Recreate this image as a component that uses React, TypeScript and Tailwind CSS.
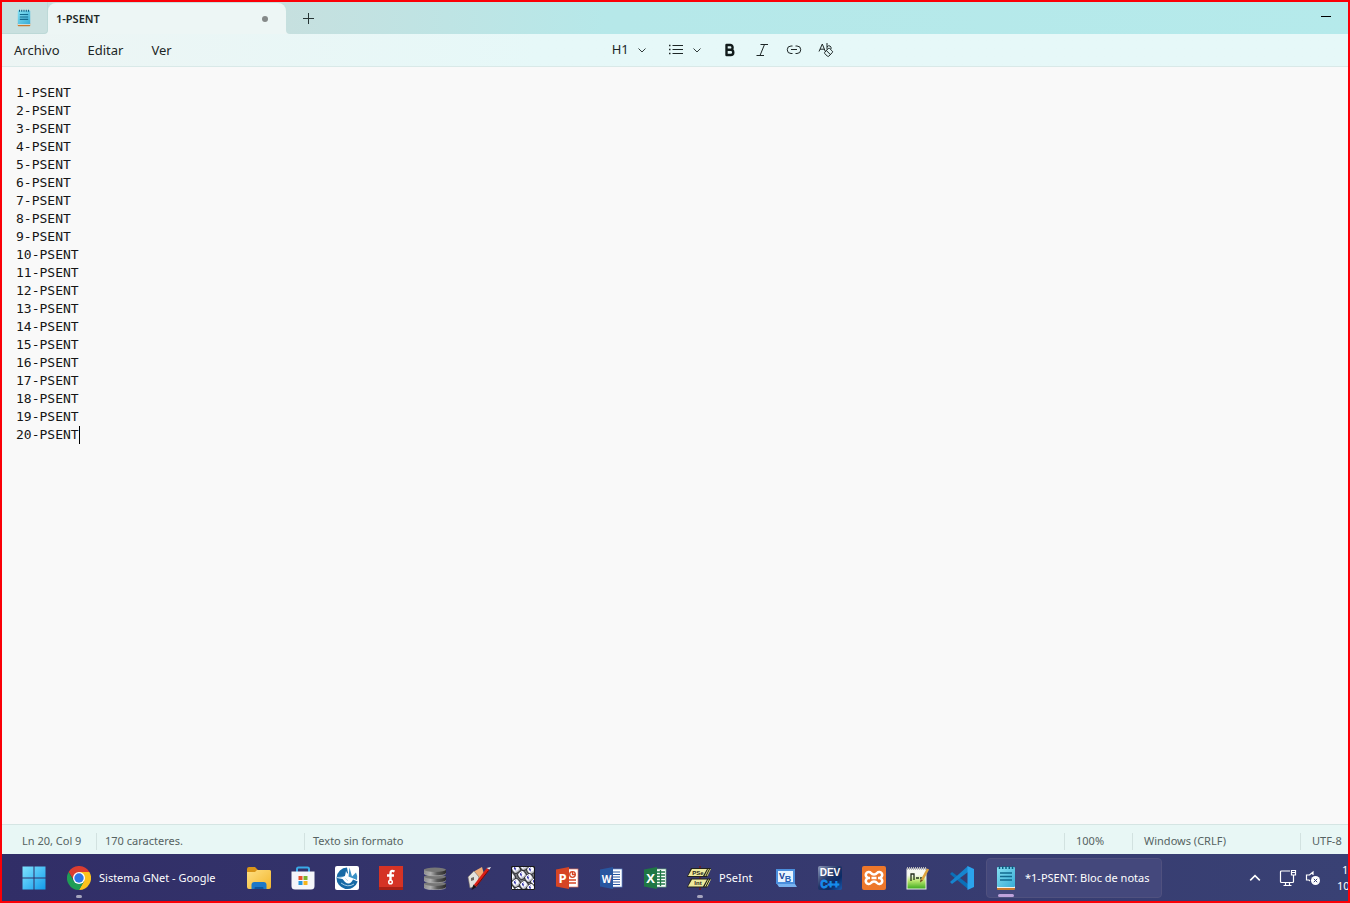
import type { ReactNode } from 'react';
import { useState } from 'react';

const INITIAL_TEXT = Array.from({ length: 20 }, (_, i) => `${i + 1}-PSENT`).join('\n');

function NotepadIcon({ className }: { className: string }) {
  return (
    <svg viewBox="0 0 20 26" className={className} aria-hidden="true">
      <defs>
        <linearGradient id="pad" x1="0" y1="0" x2="1" y2="1">
          <stop offset="0" stopColor="#86e0f2" />
          <stop offset="1" stopColor="#38acd6" />
        </linearGradient>
      </defs>
      <rect x="1" y="20" width="18" height="5" rx="1" fill="#c9792e" />
      <rect x="1" y="20" width="18" height="3" fill="#f4f1ec" />
      <rect x="1" y="2" width="18" height="20" rx="1" fill="url(#pad)" />
      <path d="M3.5 1v3M6.700 1v3M10 1v3M13.300 1v3M16.500 1v3" stroke="#0d5d80" strokeWidth="1.500" />
      <path d="M4 8h12M4 11.500h12M4 15h12" stroke="#126a8e" strokeWidth="1.500" />
    </svg>
  );
}

function Chevron({ className, up }: { className: string; up?: boolean }) {
  return (
    <svg viewBox="0 0 10 10" className={className} fill="none" stroke="currentColor" strokeWidth={up ? 1.3 : 0.9} aria-hidden="true">
      <path d={up ? 'M1 7l4-4 4 4' : 'M1.500 3.500L5 7l3.500-3.500'} />
    </svg>
  );
}

function WindowsIcon() {
  return (
    <svg viewBox="0 0 24 24" className="size-6" aria-hidden="true">
      <defs>
        <linearGradient id="win" x1="0" y1="0" x2="1" y2="1">
          <stop offset="0" stopColor="#7fe3ff" />
          <stop offset="1" stopColor="#139bea" />
        </linearGradient>
      </defs>
      <path fill="url(#win)" d="M.5.5h11v11H.5zM12.500.5h11v11h-11zM.5 12.500h11v11H.5zM12.500 12.500h11v11h-11z" />
    </svg>
  );
}

function ChromeIcon() {
  return (
    <svg viewBox="0 0 24 24" className="size-6" aria-hidden="true">
      <path fill="#db3d30" d="M1.600 6A12 12 0 0 1 22.400 6L12 6.500 7 14.500z" />
      <path fill="#fcc31e" d="M22.400 6A12 12 0 0 1 12 24l5-9L12 6z" />
      <path fill="#1f9d55" d="M1.600 6A12 12 0 0 0 12 24l5.200-9L12 17.500 6.800 15z" />
      <circle cx="12" cy="12" r="6" fill="#fff" />
      <circle cx="12" cy="12" r="4.700" fill="#2f75e8" />
    </svg>
  );
}

function FolderIcon() {
  return (
    <svg viewBox="0 0 24 24" className="size-6" aria-hidden="true">
      <defs>
        <linearGradient id="fold" x1="0" y1="0" x2="1" y2="1">
          <stop offset="0" stopColor="#ffdf83" />
          <stop offset="1" stopColor="#f2b62c" />
        </linearGradient>
      </defs>
      <path fill="#d99518" d="M0 3q0-2 2-2h6l3 3h11q2 0 2 2v5H0z" />
      <path fill="url(#fold)" d="M0 6h8l2-2h12.500q1.500 0 1.500 1.500V21q0 2-2 2H2q-2 0-2-2z" />
      <path fill="#1c78c8" d="M4.500 23v-4q0-3 3-3h9q3 0 3 3v4z" />
      <path fill="#0c559e" d="M7.500 23v-1q0-1 1-1h7q1 0 1 1v1z" />
    </svg>
  );
}

function StoreIcon() {
  return (
    <svg viewBox="0 0 24 24" className="size-6" aria-hidden="true">
      <path d="M6 7V3q0-1.500 1.500-1.500h9Q18 1.500 18 3v4" fill="none" stroke="#39a9e8" strokeWidth="2" />
      <path d="M.5 5.500h23V20q0 3.500-3.500 3.500H4Q.5 23.500.5 20z" fill="#f5f6fa" />
      <path fill="#e8502b" d="M7.500 10h4v4h-4z" />
      <path fill="#7ab52c" d="M12.500 10h4v4h-4z" />
      <path fill="#2497df" d="M7.500 15h4v4h-4z" />
      <path fill="#f6b51c" d="M12.500 15h4v4h-4z" />
    </svg>
  );
}

function GlobeBirdIcon() {
  return (
    <svg viewBox="0 0 24 24" className="size-6" aria-hidden="true">
      <rect width="24" height="24" rx="2" fill="#fff" />
      <path fill="#1769a5" d="M12 1.500A10.800 10.800 0 1 0 22.700 15.500L18 13.500Q15 20 10 16L7.500 13 2 12l7-1 4-4z" />
      <path fill="#3a91c6" d="M14.500 1.500l-1 9 8.500 3.500q1-4-1-7.500l-4 4z" />
      <path d="M2 11.500l7-.5 4 4M6 17q7 5 13 1" stroke="#b9d9ec" strokeWidth=".9" fill="none" />
      <path d="M11 5l2 4-3 4-4-1 4-2z" fill="#fff" />
    </svg>
  );
}

function FlashIcon() {
  return (
    <svg viewBox="0 0 24 24" className="size-6" aria-hidden="true">
      <rect width="24" height="24" fill="#d53325" />
      <rect y="21" width="24" height="3" fill="#a62016" />
      <path d="M15.500 5.500q-4-2-4 2v7M8 9.500h7" fill="none" stroke="#fff" strokeWidth="2.400" />
      <circle cx="11.500" cy="16" r="1.800" fill="#d53325" stroke="#fff" strokeWidth="1.500" />
    </svg>
  );
}

function DatabaseIcon() {
  return (
    <svg viewBox="0 0 24 24" className="size-6" aria-hidden="true">
      <defs>
        <linearGradient id="db">
          <stop offset="0" stopColor="#8e8e8e" />
          <stop offset=".3" stopColor="#b0b0b0" />
          <stop offset=".6" stopColor="#5a5a5a" />
          <stop offset="1" stopColor="#2b2b2b" />
        </linearGradient>
      </defs>
      {[16, 9, 2].map((y) => (
        <g key={y} transform={`translate(0 ${y})`}>
          <path d="M1 1.500v4c1 3 21 3 22 0v-4z" fill="url(#db)" />
          <ellipse cx="12" cy="1.800" rx="11" ry="2.200" fill="#777" />
          <path d="M1 5.500c1 3 21 3 22 0" stroke="#bbb" strokeWidth=".6" fill="none" />
        </g>
      ))}
    </svg>
  );
}

function PencilHouseIcon() {
  return (
    <svg viewBox="0 0 24 24" className="size-6" aria-hidden="true">
      <path fill="#efad77" d="M6 6l9-5 2 7-8 10z" />
      <path fill="#e3e2dc" d="M1 11l6-6 5 6-2 9-7 2z" stroke="#756a63" strokeWidth=".6" />
      <path d="M4 12l3-1v3l-3 1z" fill="#6b6660" />
      <path d="M21 3L8 20" stroke="#d91f16" strokeWidth="3" />
      <path d="M21.500 4.500L9.500 20" stroke="#6c0906" strokeWidth="1" />
      <path d="M19.500 2l3 1.500L24 1z" fill="#eee" />
      <path d="M6.500 18.500l3 2.500-5 3z" fill="#1b1515" />
    </svg>
  );
}

function KeysIcon() {
  const keys: [number, number][] = [
    [5, 3], [13, 0], [20, 4], [0, 11], [11, 9], [18, 12], [24, 16], [5, 17], [13, 19], [20, 22], [0, 24], [7, 25],
  ];
  return (
    <svg viewBox="0 0 24 24" className="size-6" aria-hidden="true">
      <rect width="24" height="24" fill="#77787d" />
      {keys.map(([x, y]) => (
        <g key={`${x}-${y}`} transform={`translate(${x} ${y}) rotate(-35)`}>
          <rect x="-4" y="-3.500" width="8" height="7.500" rx="2.500" fill="#b9bac0" stroke="#111117" strokeWidth=".8" />
          <rect x="-3" y="-3.500" width="6" height="5.500" rx="2" fill="#fbfbff" />
          <path d="M-1 1v-3h2M-1-.5h1.500" stroke="#3030a8" fill="none" strokeWidth=".9" />
        </g>
      ))}
      <path d="M.5.5h23v23H.5z" fill="none" stroke="#17171c" />
    </svg>
  );
}

function OfficeIcon({ letter, color, edge }: { letter: 'P' | 'W' | 'X'; color: string; edge: string }) {
  return (
    <svg viewBox="0 0 24 24" className="size-6" aria-hidden="true">
      <rect x="12" y="3" width="11" height="18" fill="#fff" stroke={edge} strokeWidth=".7" />
      {letter === 'P' && (
        <g stroke={color} fill="none" strokeWidth="1.300">
          <circle cx="17.500" cy="8.500" r="2.800" />
          <path d="M17.500 5.500v3h3M14 14h7M14 17h7" />
        </g>
      )}
      {letter === 'W' && <path d="M13 6h8M13 8.500h8M13 11h8M13 13.500h8M13 16h8M13 18.500h8" stroke={color} />}
      {letter === 'X' && <path d="M13 6h9M13 9h9M13 12h9M13 15h9M13 18h9M17.500 4v16" stroke={color} strokeWidth="1.300" />}
      <path d="M1 3.500L14 1v22L1 20.500z" fill={color} />
      <text x="7.500" y="16.500" textAnchor="middle" fontSize={letter === 'W' ? 10 : 13} fontWeight="700" fill="#fff" fontFamily="Open Sans, sans-serif">{letter}</text>
    </svg>
  );
}

function PSeIntIcon() {
  return (
    <svg viewBox="0 0 24 24" className="size-6" aria-hidden="true">
      <path d="M13 0v24" stroke="#6f1722" strokeWidth="1.500" />
      <path d="M4 2h20l-4 9H0zM4 12.500h20l-4 9H0z" fill="#23231c" />
      <path d="M5 3h15l-4 7H1zM5 13.500h15l-4 7H1z" fill="#eeea9c" />
      <path d="M21.500 3l-3.500 7M23.500 3l-3.500 7M21.500 13.500l-3.500 7M23.500 13.500l-3.500 7" stroke="#d9d67a" />
      <g fontSize="6" fontWeight="700" fontFamily="Liberation Sans, sans-serif" fill="#292720" textAnchor="middle">
        <text x="11" y="8.500">PSe</text>
        <text x="11" y="19">Int</text>
      </g>
    </svg>
  );
}

function VbIcon() {
  return (
    <svg viewBox="0 0 24 24" className="size-6" aria-hidden="true">
      <path d="M2 3h19v15H2z" fill="#4b8fdd" />
      <path d="M4 5h15v11H4z" fill="#e7f3ff" />
      <path d="M3 18h18l2 3H5z" fill="#78b2ef" />
      <text x="8" y="12.500" fontSize="9" fontWeight="700" fill="#173b91" fontFamily="Liberation Sans, sans-serif" textAnchor="middle">V</text>
      <text x="14" y="15.500" fontSize="9" fontWeight="700" fill="#2761b4" fontFamily="Liberation Sans, sans-serif" textAnchor="middle">B</text>
    </svg>
  );
}

function DevIcon() {
  return (
    <svg viewBox="0 0 24 24" className="size-6" aria-hidden="true">
      <defs>
        <linearGradient id="dev" x1="0" y1="0" x2="1" y2="1">
          <stop offset="0" stopColor="#8f99b8" />
          <stop offset=".45" stopColor="#213566" />
          <stop offset=".7" stopColor="#0b2b66" />
          <stop offset="1" stopColor="#1b5bb0" />
        </linearGradient>
      </defs>
      <rect width="24" height="24" rx="2" fill="url(#dev)" />
      <g fontWeight="700" fontFamily="Liberation Sans, sans-serif" textAnchor="middle">
        <text x="12" y="10" fontSize="10" fill="#fff">DEV</text>
        <text x="12" y="21.500" fontSize="10" fill="#168dec" stroke="#168dec" strokeWidth=".8">C++</text>
      </g>
    </svg>
  );
}

function XamppIcon() {
  return (
    <svg viewBox="0 0 24 24" className="size-6" aria-hidden="true">
      <rect width="24" height="24" rx="2" fill="#ed772b" />
      <path d="M8 12H6.500a3 3 0 1 1 2.500-5q1 1.500 3 1.500T15 7a3 3 0 1 1 2.500 5H16M8 12H6.500a3 3 0 1 0 2.500 5q1-1.500 3-1.500t3 1.500a3 3 0 1 0 2.500-5H16M9.500 12h5" fill="none" stroke="#fff" strokeWidth="2.600" strokeLinejoin="round" />
    </svg>
  );
}

function NotepadPlusIcon() {
  return (
    <svg viewBox="0 0 24 24" className="size-6" aria-hidden="true">
      <defs>
        <linearGradient id="npp" x1="0" y1="0" x2="0" y2="1">
          <stop offset=".3" stopColor="#f7f9f2" />
          <stop offset=".6" stopColor="#b8e66c" />
          <stop offset="1" stopColor="#39a91e" />
        </linearGradient>
      </defs>
      <rect x="1" y="3" width="19" height="20" fill="url(#npp)" stroke="#eee" />
      <path d="M1 2.500h19" stroke="#bbb" strokeWidth="3" strokeDasharray="1 1" />
      <path d="M5 15V8h3v6M10 12h3M14 12h2" fill="none" stroke="#24301d" strokeWidth="1.300" />
      <path d="M22 3l-6 11" stroke="#dda33e" strokeWidth="2.600" />
      <path d="M14.500 13l2.500 1.500-3 2z" fill="#70501e" />
    </svg>
  );
}

function CodeIcon() {
  return (
    <svg viewBox="0 0 24 24" className="size-6" aria-hidden="true">
      <path fill="#0b70b8" d="M0 8l2-2 16 12v5z" />
      <path fill="#1685cf" d="M0 16l2 2 16-12V0z" />
      <path fill="#2ba3ed" d="M17.500 0L24 3v18l-6.500 3z" />
    </svg>
  );
}

function TaskButton({ name, wide, active, dot, children }: { name: string; wide?: string; active?: boolean; dot?: boolean; children: ReactNode }) {
  return (
    <button
      type="button"
      aria-label={name}
      className={`relative flex h-10 shrink-0 items-center whitespace-nowrap text-left ${wide ?? 'w-11 justify-center'} ${active ? 'rounded-sm border border-[#50517f] bg-[#44487c]' : ''}`}
    >
      {children}
      {dot && <span className={`absolute bottom-0 h-[3px] rounded-full ${active ? 'left-[11px] w-4 bg-[#bfa3dc]' : 'left-5 w-1.5 bg-[#a5a4bd]'}`} />}
    </button>
  );
}

export default function App() {
  const [text, setText] = useState(INITIAL_TEXT);
  const lines = text.split('\n');
  const lastLine = lines[lines.length - 1];

  return (
    <div className="flex min-h-screen w-full flex-col overflow-hidden border-2 border-[#fb0007] bg-[#f9f9f9] font-['Noto_Sans','Open_Sans',sans-serif] text-[#1d2626]">
      <header className="flex h-8 bg-[#edf6f5]">
        <div className="flex w-[46px] items-center justify-center rounded-br-sm border-r border-b border-[#bdd9d7] bg-[#c9e0df] pr-px">
          <NotepadIcon className="h-[18px] w-[14px]" />
        </div>
        <div className="w-[238px] bg-[#c6e0df] pt-px">
          <div className="flex h-full items-center justify-between rounded-t-lg bg-[#edf6f5] pr-[18px] pl-2">
            <span className="pt-px text-[11px] font-semibold">1-PSENT</span>
            <span className="size-1.5 rounded-full bg-[#858989]" />
          </div>
        </div>
        <div className="flex flex-1 items-center justify-between rounded-bl-sm bg-linear-to-r from-[#c6e0df] via-[#b6e8e9] via-30% to-[#b5eaeb] pr-[17px] pl-[17px]">
          <button type="button" aria-label="Nueva pestaña">
            <svg viewBox="0 0 11 11" className="size-[11px]" stroke="#263434" aria-hidden="true"><path d="M5.500 0v11M0 5.500h11" /></svg>
          </button>
          <button type="button" aria-label="Minimizar" className="flex h-5 w-[10px] items-center pb-1">
            <span className="h-px w-full bg-black" />
          </button>
        </div>
      </header>

      <div className="flex h-[33px] items-center border-b border-[#d9e9e8] bg-linear-to-r from-[#edf5f4] to-[#e6f8f8] to-40%">
        <nav className="flex w-[45%] gap-7 pt-0.5 pl-3 text-[13px]">
          <button type="button">Archivo</button>
          <button type="button">Editar</button>
          <button type="button">Ver</button>
        </nav>
        <div className="flex items-center pl-1">
          <button type="button" aria-label="Encabezado" className="flex w-[56px] items-center gap-2">
            <span className="text-[13px]">H1</span>
            <Chevron className="size-2.5" />
          </button>
          <button type="button" aria-label="Lista" className="flex w-[56px] items-center gap-2">
            <svg viewBox="0 0 16 12" className="h-3 w-4" stroke="currentColor" aria-hidden="true">
              <path d="M4.500 1.500h10.500M4.500 5.500h10.500M4.500 9.500h10.500" />
              <path d="M1 1.500h1.500M1 5.500h1.500M1 9.500h1.500" strokeWidth="1.500" />
            </svg>
            <Chevron className="size-2.5" />
          </button>
          <button type="button" aria-label="Negrita" className="flex w-8">
            <svg viewBox="0 0 12 14" className="h-3.5 w-3" fill="none" stroke="#111b1b" strokeWidth="2.400" strokeLinejoin="round" aria-hidden="true">
              <path d="M2.500 2h3.700a2.400 2.400 0 0 1 0 4.800H2.500zM2.500 6.800h4.200a2.600 2.600 0 0 1 0 5.200H2.500z" />
            </svg>
          </button>
          <button type="button" aria-label="Cursiva" className="flex w-[30px]">
            <svg viewBox="0 0 12 14" className="h-3.5 w-3" fill="none" stroke="currentColor" aria-hidden="true">
              <path d="M4.500 1.500H12M.5 12.500H8M8.500 1.500l-4.500 11" />
            </svg>
          </button>
          <button type="button" aria-label="Vínculo" className="flex w-8">
            <svg viewBox="0 0 16 12" className="h-3 w-4" fill="none" stroke="currentColor" aria-hidden="true">
              <path d="M6.500 2H5a3.500 3.500 0 0 0 0 7.500h1.500M9.500 2H11a3.500 3.500 0 0 1 0 7.500H9.500M5 5.500h6" />
            </svg>
          </button>
          <button type="button" aria-label="Borrar formato" className="flex">
            <svg viewBox="0 0 16 16" className="size-4" fill="none" stroke="currentColor" aria-hidden="true">
              <path d="M1 9.500L4.300 2l3 7.500M2 7.200h4.300M9 1v6.500M9 5q1.500-2 3-1 1.500 1 1 3" />
              <path d="M11.700 6.500l2.600 2.600q.7.700 0 1.400l-3.500 3.700q-.7.700-1.400 0l-2.600-2.600q-.7-.7 0-1.400l3.500-3.700q.7-.7 1.400 0zM8.500 8.700l4 4" />
            </svg>
          </button>
        </div>
      </div>

      <main className="flex flex-1 px-[14px] pt-[17px]">
        <div className="relative flex flex-1 font-['DejaVu_Sans_Mono',monospace] text-[13px] leading-[18px]">
          <textarea
            aria-label="Editor de texto"
            spellCheck={false}
            value={text}
            onChange={(e) => setText(e.target.value)}
            className="w-full resize-none overflow-hidden bg-transparent text-[#151515] outline-none"
          />
          <span
            className="absolute h-[18px] w-px bg-black"
            style={{ left: `${lastLine.length}ch`, top: `${(lines.length - 1) * 18}px` }}
          />
        </div>
      </main>

      <footer className="flex h-[30px] items-center overflow-hidden border-t border-[#d5e5e3] bg-[#e8f7f5] pt-1 text-[11px] whitespace-nowrap text-[#566362]">
        <span className="w-[94px] shrink-0 pl-5">Ln 20, Col 9</span>
        <span className="w-[208px] shrink-0 border-l border-[#d2e2e0] pl-2">170 caracteres.</span>
        <span className="flex-1 border-l border-[#d2e2e0] pl-2">Texto sin formato</span>
        <span className="w-[68px] shrink-0 border-l border-[#d2e2e0] pl-[11px]">100%</span>
        <span className="w-[168px] shrink-0 border-l border-[#d2e2e0] pl-[11px]">Windows (CRLF)</span>
        <span className="w-12 shrink-0 border-l border-[#d2e2e0] pl-[11px]">UTF-8</span>
      </footer>

      <div className="flex h-[47px] items-center overflow-hidden bg-linear-to-r from-[#312e67] to-[#394174] pt-px pl-2.5 text-[11px] text-white">
        <TaskButton name="Inicio"><WindowsIcon /></TaskButton>
        <TaskButton name="Sistema GNet - Google" wide="w-[181px] gap-2 pl-[11px]" dot><ChromeIcon /><span className="pt-px">Sistema GNet - Google</span></TaskButton>
        <TaskButton name="Explorador de archivos"><FolderIcon /></TaskButton>
        <TaskButton name="Microsoft Store"><StoreIcon /></TaskButton>
        <TaskButton name="GNet"><GlobeBirdIcon /></TaskButton>
        <TaskButton name="Flash"><FlashIcon /></TaskButton>
        <TaskButton name="Base de datos"><DatabaseIcon /></TaskButton>
        <TaskButton name="Diseño"><PencilHouseIcon /></TaskButton>
        <TaskButton name="Teclado"><KeysIcon /></TaskButton>
        <TaskButton name="PowerPoint"><OfficeIcon letter="P" color="#d64524" edge="#ec765c" /></TaskButton>
        <TaskButton name="Word"><OfficeIcon letter="W" color="#2856a0" edge="#668fd0" /></TaskButton>
        <TaskButton name="Excel"><OfficeIcon letter="X" color="#1f7745" edge="#64ad80" /></TaskButton>
        <TaskButton name="PSeInt" wide="w-[87px] gap-2 pl-2.5" dot><PSeIntIcon /><span className="pt-px">PSeInt</span></TaskButton>
        <TaskButton name="Visual Basic"><VbIcon /></TaskButton>
        <TaskButton name="Dev-C++"><DevIcon /></TaskButton>
        <TaskButton name="XAMPP"><XamppIcon /></TaskButton>
        <TaskButton name="Notepad++"><NotepadPlusIcon /></TaskButton>
        <TaskButton name="Visual Studio Code"><CodeIcon /></TaskButton>
        <TaskButton name="Bloc de notas" wide="ml-0.5 w-[176px] gap-2 pl-2" active dot>
          <NotepadIcon className="h-[26px] w-[22px]" />
          <span className="pt-px">*1-PSENT: Bloc de notas</span>
        </TaskButton>
        <div className="ml-auto flex shrink-0 items-center">
          <button type="button" aria-label="Iconos ocultos" className="mr-[18px]"><Chevron up className="size-3" /></button>
          <button type="button" aria-label="Red" className="mr-2">
            <svg viewBox="0 0 18 18" className="size-[18px]" fill="none" stroke="#fff" strokeWidth="1.200" aria-hidden="true">
              <path d="M11 2H2.500Q1.500 2 1.500 3v9.500q0 1 1 1h11q1 0 1-1V9M6.500 13.500v3M10.500 13.500v3M4.500 16.500h8M12.500 1.500h4v4.500h-4zM12.500 3.500h4M14.500 6v3" />
            </svg>
          </button>
          <button type="button" aria-label="Volumen" className="mr-4">
            <svg viewBox="0 0 16 16" className="size-4" fill="none" stroke="#fff" aria-hidden="true">
              <path d="M8 5V2L4.500 5H1.500v5H4l1 1" strokeWidth="1.200" />
              <circle cx="10.500" cy="10.500" r="4.500" fill="#fff" stroke="none" />
              <path d="M8.800 8.800l3.400 3.400M12.200 8.800l-3.400 3.400" stroke="#394174" />
            </svg>
          </button>
          <div className="w-[11px] overflow-hidden leading-4 whitespace-nowrap">
            <div className="pl-[5px]">1</div>
            <div>10</div>
          </div>
        </div>
      </div>
    </div>
  );
}
